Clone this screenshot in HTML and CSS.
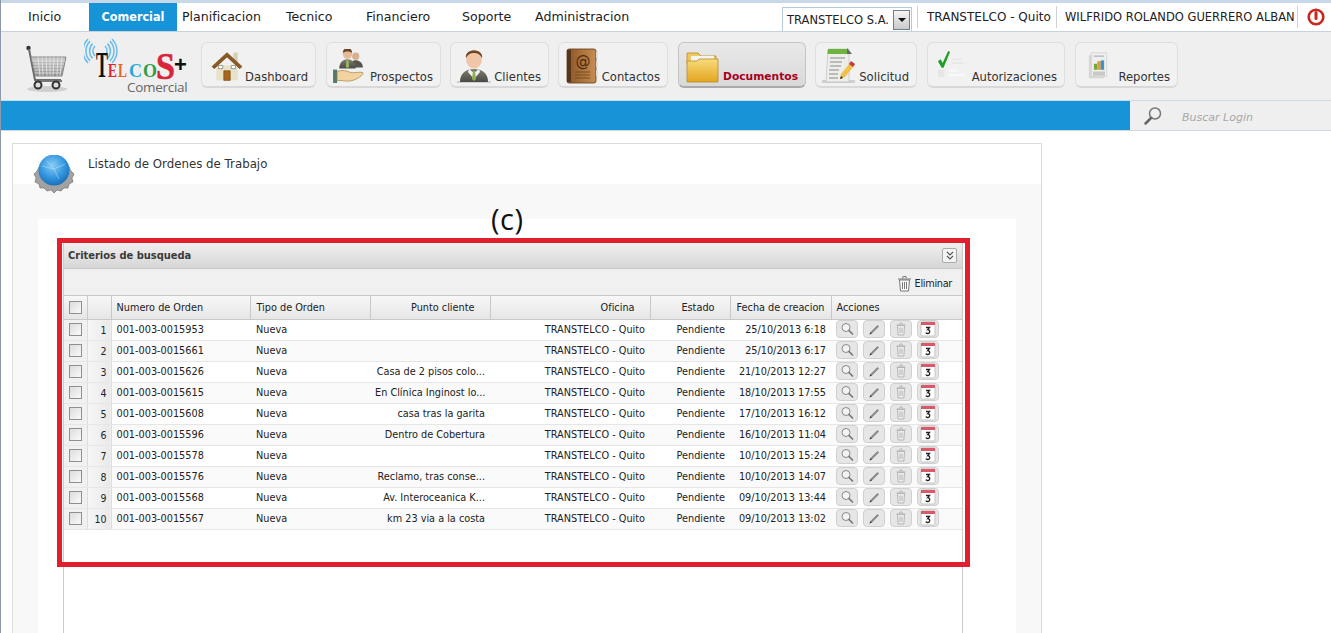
FILE: index.html
```html
<!DOCTYPE html>
<html lang="es">
<head>
<meta charset="utf-8">
<title>Listado de Ordenes de Trabajo</title>
<link rel="stylesheet" href="styles.css">
</head>
<body>
<svg class="defs" width="0" height="0" aria-hidden="true">
  <defs>
    <linearGradient id="metal" x1="0" y1="0" x2="0" y2="1"><stop offset="0" stop-color="#c9c9c9"/><stop offset="1" stop-color="#8c8c8c"/></linearGradient>
    <linearGradient id="folder" x1="0" y1="0" x2="0" y2="1"><stop offset="0" stop-color="#f8dc7c"/><stop offset="1" stop-color="#e3a51f"/></linearGradient>
    <linearGradient id="suit" x1="0" y1="0" x2="0" y2="1"><stop offset="0" stop-color="#7e7e72"/><stop offset="1" stop-color="#4a4a44"/></linearGradient>
    <linearGradient id="book" x1="0" y1="0" x2="1" y2="0"><stop offset="0" stop-color="#8a5526"/><stop offset="1" stop-color="#c98d50"/></linearGradient>
    <radialGradient id="globe" cx=".45" cy=".35" r=".7"><stop offset="0" stop-color="#86cdf5"/><stop offset=".6" stop-color="#2f92dc"/><stop offset="1" stop-color="#1769b0"/></radialGradient>
    <symbol id="i-search" viewBox="0 0 20 16"><circle cx="9" cy="6.500" r="4" fill="#f4f4f4" stroke="#888" stroke-width="1"/><path d="M12 9.500l3.500 3.500" stroke="#777" stroke-width="1.700" stroke-linecap="round"/></symbol>
    <symbol id="i-edit" viewBox="0 0 20 16"><path d="M5.500 13.500l1-2.500 7-7 1.500 1.500-7 7z" fill="#8a8a8a"/><path d="M5.500 13.500l1-2.500 1.500 1.500z" fill="#444"/></symbol>
    <symbol id="i-trash" viewBox="0 0 20 16"><path d="M6.500 4.500h7l-.6 9.500h-5.800z" fill="#eee" stroke="#b4b4b4"/><path d="M5.500 4h9M8.500 3.500l.5-1.500h2l.5 1.500M9 6.500v5.500M11 6.500v5.500" fill="none" stroke="#b4b4b4"/></symbol>
    <symbol id="i-cal" viewBox="0 0 20 16"><rect x="3" y="1" width="14" height="14" rx="1" fill="#fff" stroke="#c4c4c4"/><rect x="3" y="1" width="14" height="3" fill="#d9586a"/><path d="M8 6.500h3.500l-1.800 2.200c2.600-.2 2.800 4-.2 3.800-.8 0-1.400-.3-1.700-.8" fill="none" stroke="#222" stroke-width="1.300"/></symbol>
  </defs>
</svg>
<div class="page">
  <header class="menu">
    <nav class="menu-nav">
      <a class="menu-item">Inicio</a>
      <a class="menu-item menu-item-active">Comercial</a>
      <a class="menu-item menu-item-after">Planificacion</a>
      <a class="menu-item">Tecnico</a>
      <a class="menu-item">Financiero</a>
      <a class="menu-item">Soporte</a>
      <a class="menu-item">Administracion</a>
    </nav>
    <div class="session">
      <div class="combo"><span class="combo-text">TRANSTELCO S.A.</span><span class="combo-btn"><i class="combo-arrow"></i></span></div>
      <span class="session-item session-office">TRANSTELCO - Quito</span>
      <span class="session-item session-user">WILFRIDO ROLANDO GUERRERO ALBAN</span>
      <span class="session-power">
        <svg width="18" height="18" viewBox="0 0 18 18"><circle cx="9" cy="9" r="7.300" fill="#fff" stroke="#c8281e" stroke-width="2.600"/><path d="M9 4.500v6" stroke="#c8281e" stroke-width="3" stroke-linecap="round"/></svg>
      </span>
    </div>
  </header>

  <section class="toolbar">
    <svg class="cart" width="44" height="50" viewBox="0 0 44 50">
      <ellipse cx="22" cy="45" rx="20" ry="3" fill="#cfcfcf"/>
      <circle cx="3.500" cy="4" r="2.200" fill="#333"/>
      <path d="M4 5l6 31h26" fill="none" stroke="#6a6a6a" stroke-width="2"/>
      <path d="M6 13h35l-4 19H11z" fill="url(#metal)" stroke="#888"/>
      <path d="M7 17h33M8 20h31M8 23h30M9 26h28M10 29h26M13 13l2 19M17 13l1 19M21 13l1 19M25 13v19M29 13l-1 19M33 13l-1 19M37 13l-2 19" stroke="#eee" stroke-width=".7"/>
      <path d="M10 36h27v2H10z" fill="#777"/>
      <circle cx="13" cy="41" r="3.500" fill="#ddd" stroke="#333" stroke-width="2"/>
      <circle cx="31" cy="41" r="3.500" fill="#ddd" stroke="#333" stroke-width="2"/>
    </svg>
    <svg class="logo" width="106" height="60" viewBox="0 0 106 60">
      <g fill="none" stroke="#6cbbe8" stroke-width="1.500">
        <path d="M11 8A7 7 0 0 0 11 18M8.600 5.600A10.500 10.500 0 0 0 8.600 20.400M6.100 3.100A14 14 0 0 0 6.100 22.900M4 1A17 17 0 0 0 4 25"/>
        <path d="M21 8A7 7 0 0 1 21 18M23.400 5.600A10.500 10.500 0 0 1 23.400 20.400M25.900 3.100A14 14 0 0 1 25.900 22.900M28 1A17 17 0 0 1 28 25"/>
      </g>
      <text class="logo-t" x="12" y="39" textLength="12" lengthAdjust="spacingAndGlyphs">T</text>
      <text class="logo-l logo-e" x="24" y="39" textLength="9" lengthAdjust="spacingAndGlyphs">E</text>
      <text class="logo-l logo-ll" x="34" y="39" textLength="9" lengthAdjust="spacingAndGlyphs">L</text>
      <text class="logo-l logo-c" x="45" y="39" textLength="13" lengthAdjust="spacingAndGlyphs">C</text>
      <text class="logo-l logo-o" x="59" y="39" textLength="14" lengthAdjust="spacingAndGlyphs">O</text>
      <text class="logo-s" x="72" y="41" textLength="19" lengthAdjust="spacingAndGlyphs">S</text>
      <text class="logo-plus" x="90" y="34">+</text>
      <text class="logo-sub" x="43" y="54">Comercial</text>
    </svg>

    <a class="tool tool-dashboard">
      <svg width="32" height="29" viewBox="0 3 30 26"><path d="M5 15h20v14H5z" fill="#e8e2c8"/><path d="M21 3h4v9h-4z" fill="#d5cfb8"/><path d="M1 16L15 3l14 13-2 2L15 7 3 18z" fill="#8a5a22" stroke="#6e4415" stroke-width=".6"/><path d="M12 20h6v9h-6z" fill="#a8651c" stroke="#6e4415" stroke-width=".6"/><path d="M7 15h4v3H7zM19 15h4v3h-4z" fill="#fff" stroke="#7d7d70" stroke-width=".7"/></svg>
      <span class="tool-label">Dashboard</span>
    </a>
    <a class="tool tool-prospectos">
      <svg width="33" height="35" viewBox="0 3 32 34"><circle cx="23" cy="10" r="3.500" fill="#d9b08f"/><path d="M17 21c0-5 3-7 6-7s7 2 7 7z" fill="#55554e"/><circle cx="15" cy="8" r="4.500" fill="#e4ba98"/><path d="M10.500 7c0-7 9-7 9 0-2-2-7-2-9 0z" fill="#6b4526"/><path d="M7 22c0-6 4-9 8-9s8 3 8 9z" fill="url(#suit)"/><path d="M14 14h2l.5 7h-3z" fill="#9dbb5c"/><path d="M1 23h4v13H1z" fill="#55776f"/><path d="M5 25c7-3 11 1 15 1 4 0 8-1 10 0 1 2-6 7-12 8-4 .6-8-.5-13-.5z" fill="#f1d39f" stroke="#a98448" stroke-width=".7"/></svg>
      <span class="tool-label">Prospectos</span>
    </a>
    <a class="tool tool-clientes">
      <svg width="36" height="34" viewBox="0 2 36 34"><path d="M1 34h34v2H1z" fill="#d0d0d0"/><path d="M4 35c0-9 6-13 14-13s14 4 14 13z" fill="url(#suit)"/><path d="M13 22l5 4 5-4 1 3-6 7-6-7z" fill="#f3f3f3"/><path d="M17 24h2l1 8-2 2-2-2z" fill="#8fb04e"/><ellipse cx="18" cy="12" rx="8" ry="9.500" fill="#f1c6a6"/><path d="M10 11C8 1 28 1 26 11c-2-4-5-5-8-5s-6 1-8 5z" fill="#6c4527"/></svg>
      <span class="tool-label">Clientes</span>
    </a>
    <a class="tool tool-contactos">
      <svg width="33" height="36" viewBox="0 0 33 36"><rect x="1" y="1" width="29" height="34" rx="2" fill="url(#book)" stroke="#5f3a19" stroke-width=".8"/><path d="M1 2h4v32H1z" fill="#54361c"/><path d="M30 4h2v6h-2zM30 13h2v6h-2zM30 22h2v6h-2z" fill="#ddd"/><text class="book-at" x="17" y="18">@</text><path d="M9 24h15M9 27h15M9 30h15" stroke="#6a4420" stroke-width=".8"/></svg>
      <span class="tool-label">Contactos</span>
    </a>
    <a class="tool tool-documentos">
      <svg width="33" height="32" viewBox="0 0 33 32"><path d="M1 5V2h11l3 3h15v8H1z" fill="#f0c95e" stroke="#b98a25" stroke-width=".8"/><path d="M5 5h23v7H5z" fill="#f4f4f4"/><path d="M1 10h10l2-2h19v23H1z" fill="url(#folder)" stroke="#b98a25" stroke-width=".8"/></svg>
      <span class="tool-label tool-label-active">Documentos</span>
    </a>
    <a class="tool tool-solicitud">
      <svg width="34" height="35" viewBox="0 0 34 35"><path d="M0 32h33v3H0z" fill="#cfcfcf"/><path d="M6 1h21v33H4z" fill="#ededea" stroke="#bbb" stroke-width=".6"/><path d="M6 1h19v5H5.500z" fill="#6cb33f"/><path d="M25 0l5 6h-5z" fill="#666"/><path d="M8 10h15M8 14h12M8 18h11M7 22h10M7 26h9M7 30h9" stroke="#8a8a8a" stroke-width="1.200"/><path d="M18 31l1-5 9-11 4 3-9 11z" fill="#f2c14b"/><path d="M27 16l2-3 4 3-2 3z" fill="#c23a3a"/><path d="M18 31l1-3 2 2z" fill="#222"/></svg>
      <span class="tool-label">Solicitud</span>
    </a>
    <a class="tool tool-autorizaciones">
      <svg width="28" height="29" viewBox="0 1 30 31"><path d="M1 13l3-2 2 4 6-13 2 1-7 17h-2z" fill="#1f9e26"/><path d="M16 11h10M16 15h13" stroke="#e4e4e4" stroke-width="1.500"/><rect x="1" y="22" width="7" height="8" fill="#e6e6e6"/><path d="M13 23h9M13 28h17" stroke="#fafafa" stroke-width="2"/></svg>
      <span class="tool-label">Autorizaciones</span>
    </a>
    <a class="tool tool-reportes">
      <svg width="24" height="29" viewBox="0 0 28 34"><path d="M2 5h18v27H2z" fill="#d8d8d4"/><path d="M5 2h18v28H5z" fill="#eee" stroke="#c4c4c0" stroke-width=".6"/><path d="M8 6h12" stroke="#999"/><path d="M8 15h4v7H8z" fill="#7ba83e"/><path d="M12 12h4v10h-4z" fill="#e29a35"/><path d="M16 11h4v11h-4z" fill="#3d93c9"/><path d="M7 24h14v5H7z" fill="#c8c8c8"/></svg>
      <span class="tool-label">Reportes</span>
    </a>
  </section>

  <section class="bluebar">
    <div class="search">
      <svg width="20" height="20" viewBox="0 0 20 20"><circle cx="12" cy="7.500" r="5.500" fill="none" stroke="#777" stroke-width="1.500"/><path d="M8 12l-5.500 5.500" stroke="#666" stroke-width="2.500" stroke-linecap="round"/></svg>
      <span class="search-text">Buscar Login</span>
    </div>
  </section>

  <main class="panel">
    <div class="panel-head">
      <svg class="panel-globe" width="42" height="40" viewBox="0 0 42 40">
        <path d="M21 8l4 2 4-1 3 3 4 0 2 4 3 3-2 4 1 4-4 2-1 4-4 0-3 3-4-1-3 3-3-3-4 1-3-3-4 0-1-4-4-2 1-4-2-4 3-3 2-4 4 0 3-3 4 1z" fill="#a2a2a2" stroke="#666" stroke-width=".6"/>
        <circle cx="21" cy="21" r="9" fill="#ddd"/>
        <circle cx="21" cy="15" r="15.500" fill="url(#globe)"/>
        <path d="M9 11l12 3 11-5M14 6l7 8 5 10" stroke="#bfe5fb" stroke-width=".5" fill="none"/>
      </svg>
      <h1 class="panel-title">Listado de Ordenes de Trabajo</h1>
    </div>
    <div class="panel-body">
      <span class="annotation">(c)</span>
      <div class="inner">
        <div class="grid">
          <div class="highlight"></div>
          <div class="grid-title">
            <span class="grid-title-text">Criterios de busqueda</span>
            <span class="collapse"><svg width="10" height="10" viewBox="0 0 10 10"><path d="M2 1l3 3 3-3M2 5l3 3 3-3" fill="none" stroke="#555" stroke-width="1.100"/></svg></span>
          </div>
          <div class="grid-tools">
            <svg width="15" height="17" viewBox="0 0 15 17"><path d="M2.500 5h10l-1 11h-8z" fill="#fff" stroke="#777"/><path d="M1 4h13M5.500 3.500L6 1.500h3l.5 2M5.500 7v7M7.500 7v7M9.500 7v7" fill="none" stroke="#777"/></svg>
            <span>Eliminar</span>
          </div>
          <table class="orders">
            <colgroup>
              <col class="c-check"><col class="c-num"><col class="c-order"><col class="c-type"><col class="c-point"><col class="c-office"><col class="c-state"><col class="c-date"><col class="c-actions">
            </colgroup>
            <thead>
              <tr>
                <th class="cell-check"><i class="check"></i></th><th></th><th class="left">Numero de Orden</th><th class="left">Tipo de Orden</th><th class="right">Punto cliente</th><th class="right">Oficina</th><th class="right">Estado</th><th class="date">Fecha de creacion</th><th class="left">Acciones</th>
              </tr>
            </thead>
            <tbody>
              <tr><td class="cell-check"><i class="check"></i></td><td class="cell-num">1</td><td>001-003-0015953</td><td>Nueva</td><td class="r"></td><td class="r">TRANSTELCO - Quito</td><td class="r">Pendiente</td><td class="r">25/10/2013 6:18</td><td><div class="acts"><span class="act"><svg><use href="#i-search"/></svg></span><span class="act"><svg><use href="#i-edit"/></svg></span><span class="act"><svg><use href="#i-trash"/></svg></span><span class="act"><svg><use href="#i-cal"/></svg></span></div></td></tr>
              <tr><td class="cell-check"><i class="check"></i></td><td class="cell-num">2</td><td>001-003-0015661</td><td>Nueva</td><td class="r"></td><td class="r">TRANSTELCO - Quito</td><td class="r">Pendiente</td><td class="r">25/10/2013 6:17</td><td><div class="acts"><span class="act"><svg><use href="#i-search"/></svg></span><span class="act"><svg><use href="#i-edit"/></svg></span><span class="act"><svg><use href="#i-trash"/></svg></span><span class="act"><svg><use href="#i-cal"/></svg></span></div></td></tr>
              <tr><td class="cell-check"><i class="check"></i></td><td class="cell-num">3</td><td>001-003-0015626</td><td>Nueva</td><td class="r">Casa de 2 pisos colo...</td><td class="r">TRANSTELCO - Quito</td><td class="r">Pendiente</td><td class="r">21/10/2013 12:27</td><td><div class="acts"><span class="act"><svg><use href="#i-search"/></svg></span><span class="act"><svg><use href="#i-edit"/></svg></span><span class="act"><svg><use href="#i-trash"/></svg></span><span class="act"><svg><use href="#i-cal"/></svg></span></div></td></tr>
              <tr><td class="cell-check"><i class="check"></i></td><td class="cell-num">4</td><td>001-003-0015615</td><td>Nueva</td><td class="r">En Clínica Inginost lo...</td><td class="r">TRANSTELCO - Quito</td><td class="r">Pendiente</td><td class="r">18/10/2013 17:55</td><td><div class="acts"><span class="act"><svg><use href="#i-search"/></svg></span><span class="act"><svg><use href="#i-edit"/></svg></span><span class="act"><svg><use href="#i-trash"/></svg></span><span class="act"><svg><use href="#i-cal"/></svg></span></div></td></tr>
              <tr><td class="cell-check"><i class="check"></i></td><td class="cell-num">5</td><td>001-003-0015608</td><td>Nueva</td><td class="r">casa tras la garita</td><td class="r">TRANSTELCO - Quito</td><td class="r">Pendiente</td><td class="r">17/10/2013 16:12</td><td><div class="acts"><span class="act"><svg><use href="#i-search"/></svg></span><span class="act"><svg><use href="#i-edit"/></svg></span><span class="act"><svg><use href="#i-trash"/></svg></span><span class="act"><svg><use href="#i-cal"/></svg></span></div></td></tr>
              <tr><td class="cell-check"><i class="check"></i></td><td class="cell-num">6</td><td>001-003-0015596</td><td>Nueva</td><td class="r">Dentro de Cobertura</td><td class="r">TRANSTELCO - Quito</td><td class="r">Pendiente</td><td class="r">16/10/2013 11:04</td><td><div class="acts"><span class="act"><svg><use href="#i-search"/></svg></span><span class="act"><svg><use href="#i-edit"/></svg></span><span class="act"><svg><use href="#i-trash"/></svg></span><span class="act"><svg><use href="#i-cal"/></svg></span></div></td></tr>
              <tr><td class="cell-check"><i class="check"></i></td><td class="cell-num">7</td><td>001-003-0015578</td><td>Nueva</td><td class="r"></td><td class="r">TRANSTELCO - Quito</td><td class="r">Pendiente</td><td class="r">10/10/2013 15:24</td><td><div class="acts"><span class="act"><svg><use href="#i-search"/></svg></span><span class="act"><svg><use href="#i-edit"/></svg></span><span class="act"><svg><use href="#i-trash"/></svg></span><span class="act"><svg><use href="#i-cal"/></svg></span></div></td></tr>
              <tr><td class="cell-check"><i class="check"></i></td><td class="cell-num">8</td><td>001-003-0015576</td><td>Nueva</td><td class="r">Reclamo, tras conse...</td><td class="r">TRANSTELCO - Quito</td><td class="r">Pendiente</td><td class="r">10/10/2013 14:07</td><td><div class="acts"><span class="act"><svg><use href="#i-search"/></svg></span><span class="act"><svg><use href="#i-edit"/></svg></span><span class="act"><svg><use href="#i-trash"/></svg></span><span class="act"><svg><use href="#i-cal"/></svg></span></div></td></tr>
              <tr><td class="cell-check"><i class="check"></i></td><td class="cell-num">9</td><td>001-003-0015568</td><td>Nueva</td><td class="r">Av. Interoceanica K...</td><td class="r">TRANSTELCO - Quito</td><td class="r">Pendiente</td><td class="r">09/10/2013 13:44</td><td><div class="acts"><span class="act"><svg><use href="#i-search"/></svg></span><span class="act"><svg><use href="#i-edit"/></svg></span><span class="act"><svg><use href="#i-trash"/></svg></span><span class="act"><svg><use href="#i-cal"/></svg></span></div></td></tr>
              <tr><td class="cell-check"><i class="check"></i></td><td class="cell-num">10</td><td>001-003-0015567</td><td>Nueva</td><td class="r">km 23 via a la costa</td><td class="r">TRANSTELCO - Quito</td><td class="r">Pendiente</td><td class="r">09/10/2013 13:02</td><td><div class="acts"><span class="act"><svg><use href="#i-search"/></svg></span><span class="act"><svg><use href="#i-edit"/></svg></span><span class="act"><svg><use href="#i-trash"/></svg></span><span class="act"><svg><use href="#i-cal"/></svg></span></div></td></tr>
            </tbody>
          </table>
        </div>
      </div>
    </div>
  </main>
</div>
</body>
</html>
```
FILE: styles.css
```css
html, body { margin: 0; padding: 0; height: 633px; overflow: hidden; background: #fff; }
body { font-family: "DejaVu Sans", sans-serif; color: #222; }
.defs { position: absolute; }
.page { height: 633px; border-left: 1px solid #8d98ab; box-sizing: border-box; overflow: hidden; }

/* top menu */
.menu { display: flex; justify-content: space-between; height: 28px; border-top: 3px solid #c9d8e8; border-bottom: 1px solid #c8d2de; box-sizing: content-box; }
.menu-nav { display: grid; grid-template-columns: 61px 88px 109px 80px 96px 73px auto; padding-left: 27px; font-size: 12.600px; line-height: 28px; }
.menu-item { color: #1d1d1d; white-space: nowrap; }
.menu-item-active { background: #1793d8; color: #fff; font-weight: 700; text-align: center; font-family: "DejaVu Sans Condensed", sans-serif; font-size: 12.500px; }
.menu-item-after { padding-left: 5px; }
.session { display: flex; align-items: flex-start; }
.combo { display: flex; align-items: center; justify-content: space-between; width: 130px; height: 24px; margin-top: 4px; border: 1px solid #b7cadc; border-bottom: 0; padding-left: 4px; box-sizing: border-box; font-size: 11.500px; }
.combo-btn { display: flex; align-items: center; justify-content: center; width: 17px; height: 20px; margin-right: 1px; border: 1px solid #6f7f92; background: linear-gradient(#f5f5f5, #c9c9c9); box-sizing: border-box; }
.combo-arrow { border: 4px solid transparent; border-top: 4px solid #111; border-bottom: 0; }
.session-item { height: 22px; margin-top: 3px; line-height: 23px; white-space: nowrap; border-left: 1px solid #ccd2d8; box-sizing: border-box; }
.session-office { width: 139px; margin-left: 5px; padding-left: 9px; font-size: 12px; }
.session-user { width: 241px; padding-left: 8px; font-size: 11.500px; }
.session-power { width: 34px; height: 22px; margin-top: 3px; padding: 2px 0 0 9px; border-left: 1px solid #ccd2d8; box-sizing: border-box; }

/* icon toolbar */
.toolbar { display: flex; align-items: flex-start; height: 68px; background: #efefef; box-sizing: border-box; padding-left: 24px; }
.cart { margin-top: 12px; flex: none; }
.logo { margin: 6px 0 0 15px; flex: none; }
.logo text { font-family: "Liberation Serif", serif; font-weight: 700; }
.logo .logo-t { font-size: 35px; fill: #111; }
.logo-l { font-size: 18px; }
.logo-e { fill: #d9253b; } .logo-ll { fill: #e06a2a; } .logo-c { fill: #29a8e0; } .logo-o { fill: #2f9e44; }
.logo .logo-s { font-size: 38px; fill: #d9253b; stroke: #d9253b; stroke-width: .6px; }
.logo .logo-plus { font-family: "Liberation Sans", sans-serif; font-size: 22px; fill: #111; }
.logo .logo-sub { font-family: "Open Sans", sans-serif; font-weight: 400; font-size: 13.500px; fill: #666; letter-spacing: -.3px; }
.tool { display: flex; align-items: flex-end; justify-content: space-between; height: 46px; margin-top: 10px; padding: 0 7px 1px 9px; box-sizing: border-box; border: 1px solid #dedede; border-bottom: 2px solid #d8d8d8; border-radius: 6px; background: #f1f1f1; flex: none; }
.tool svg { align-self: flex-start; flex: none; }
.tool-label { font-size: 11.600px; color: #333; line-height: 16px; white-space: nowrap; }
.tool-label-active { color: #a8001c; font-weight: 700; font-size: 10.700px; }
.tool-dashboard { width: 115px; margin-left: 11px; }
.tool-dashboard svg { margin-top: 9px; }
.tool-prospectos { width: 115px; margin-left: 10px; padding-left: 5px; }
.tool-prospectos svg { margin-top: 6px; }
.tool-clientes { width: 99px; margin-left: 9px; padding-left: 5px; }
.tool-clientes svg { margin-top: 6px; }
.tool-contactos { width: 110px; margin-left: 9px; padding-left: 7px; }
.tool-contactos svg { margin-top: 5px; }
.tool-documentos { width: 128px; margin-left: 10px; background: linear-gradient(#e9e9e9, #d9d9d9); border-color: #c4c4c4; border-bottom-color: #aaa; padding-left: 7px; }
.tool-documentos svg { margin-top: 8px; }
.tool-solicitud { width: 102px; margin-left: 9px; padding-left: 6px; }
.tool-solicitud svg { margin-top: 5px; }
.tool-autorizaciones { width: 138px; margin-left: 10px; padding-left: 9px; }
.tool-autorizaciones svg { margin-top: 7px; }
.tool-reportes { width: 103px; margin-left: 10px; padding-left: 11px; }
.tool-reportes svg { margin-top: 8px; }

/* blue bar */
.bluebar { display: flex; justify-content: flex-end; height: 29px; background: #1793d8; border-top: 1px solid #c9dcea; border-bottom: 1px solid #cfd8e2; box-sizing: content-box; }
.search { display: flex; align-items: center; width: 201px; background: #efefef; padding-left: 13px; box-sizing: border-box; }
.search-text { margin: 4px 0 0 19px; font-size: 11px; font-style: italic; color: #a8a8a8; }

/* panel */
.panel { width: 1030px; height: 600px; margin: 12px 0 0 11px; border: 1px solid #dcdcdc; box-sizing: border-box; background: #f8f8f8; }
.panel-head { position: relative; height: 40px; background: #fff; padding: 13px 0 0 75px; box-sizing: border-box; }
.panel-globe { position: absolute; left: 20px; top: 11px; }
.panel-title { margin: 0; font-size: 11.800px; font-weight: 400; color: #333; line-height: 14px; }
.panel-body { position: relative; padding: 35px 25px 0 25px; }
.annotation { position: absolute; left: 478px; top: 17px; font-family: "Open Sans", sans-serif; font-size: 29px; letter-spacing: .5px; line-height: 36px; color: #111; z-index: 3; }
.inner { background: #fff; height: 420px; padding: 24px 0 0 25px; }
.grid { position: relative; width: 900px; height: 400px; border: solid #ccc; border-width: 0 1px; box-sizing: border-box; font-family: "DejaVu Sans Condensed", "DejaVu Sans", sans-serif; font-size: 10.800px; color: #222; }
.highlight { position: absolute; left: -7px; right: -8px; top: -5px; height: 329px; border: 5px solid #e2202d; box-sizing: border-box; pointer-events: none; z-index: 2; }
.grid-title { display: flex; align-items: center; justify-content: space-between; height: 26px; padding: 0 5px 0 4px; background: linear-gradient(#f0f0f0, #d6d6d6); border-bottom: 1px solid #c8c8c8; box-sizing: border-box; }
.grid-title-text { font-family: "DejaVu Sans Condensed", sans-serif; font-weight: 700; font-size: 11px; color: #3a3a3a; }
.collapse { display: flex; align-items: center; justify-content: center; width: 13px; height: 13px; border: 1px solid #aaa; border-radius: 2px; background: #f4f4f4; }
.grid-tools { display: flex; align-items: center; justify-content: flex-end; gap: 3px; height: 27px; padding: 2px 10px 0 0; background: #f0f0f0; border-bottom: 1px solid #c8c8c8; box-sizing: border-box; letter-spacing: -.3px; }

/* table */
.orders { width: 898px; table-layout: fixed; border-collapse: collapse; }
.c-check { width: 23px; } .c-num { width: 24px; } .c-order { width: 139px; } .c-type { width: 120px; } .c-point { width: 120px; } .c-office { width: 160px; } .c-state { width: 80px; } .c-date { width: 101px; } .c-actions { width: 131px; }
.orders th { height: 23px; padding: 0 5px; font-weight: 400; background: linear-gradient(#f7f7f7, #e6e6e6); border-right: 1px solid #c8c8c8; border-bottom: 1px solid #c8c8c8; box-sizing: border-box; white-space: nowrap; }
.orders th.left { text-align: left; }
.orders th.left + th.left { padding-left: 6px; }
.orders th.right { text-align: right; padding-right: 15px; }
.orders th.date { text-align: right; padding-right: 6px; }
.orders td { height: 21px; padding: 0 5px 0 5px; border-bottom: 1px solid #e6e6e6; box-sizing: border-box; white-space: nowrap; overflow: hidden; }
.orders td:nth-child(4) { padding-left: 6px; }
.orders tbody tr:nth-child(even) td { background: #fafafa; }
.orders td.r { text-align: right; padding-right: 5px; }
.orders .cell-check { padding: 0; text-align: center; }
.orders td.cell-check, .orders tbody tr:nth-child(even) td.cell-check { background: #f1f1f1; border-right: 1px solid #ddd; }
.orders td.cell-num, .orders tbody tr:nth-child(even) td.cell-num { background: linear-gradient(90deg, #f6f6f6, #e9e9e9); text-align: right; padding-right: 4px; border-right: 1px solid #ddd; font-size: 10.500px; }
.check { display: inline-block; width: 13px; height: 13px; vertical-align: middle; border: 1px solid #8f8f8f; background: linear-gradient(135deg, #dcdcdc, #fafafa); box-sizing: border-box; }
.acts { display: flex; gap: 5px; margin-top: -1px; }
.act { display: block; width: 22px; height: 18px; border-radius: 4px; border: 1px solid #d0d0d0; background: #e6e6e6; box-sizing: border-box; overflow: hidden; }
.act svg { display: block; width: 20px; height: 16px; }
.book-at { font-family: "DejaVu Sans", sans-serif; font-size: 15px; fill: #4a2c10; text-anchor: middle; }
```
